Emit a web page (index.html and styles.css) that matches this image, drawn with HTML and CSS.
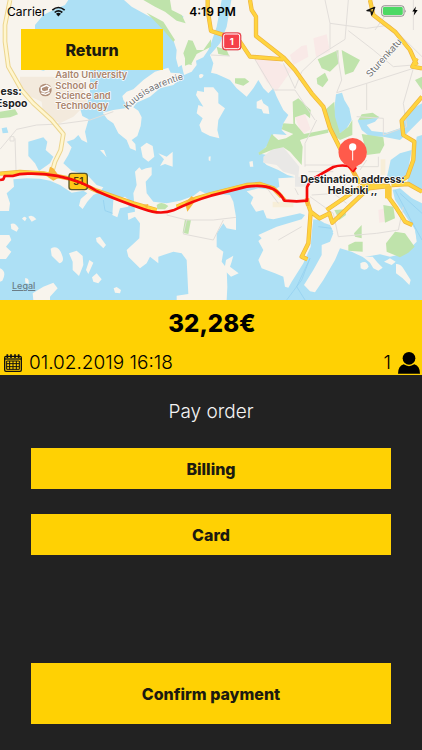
FILE: index.html
```html
<!DOCTYPE html>
<html lang="en">
<head>
<meta charset="utf-8">
<meta name="viewport" content="width=device-width, initial-scale=1">
<title>Pay order</title>
<link rel="stylesheet" href="styles.css">
</head>
<body>
<main class="app">
  <section class="map">
    <svg class="map-canvas" viewBox="0 0 1266 900" role="img" aria-label="Route from Espoo to Helsinki">
      <rect class="water" width="1266" height="900"/>

      <g transform="translate(0 180)">
        <!-- mainland and large peninsulas -->
        <g class="land">
          <path d="M0 -180H205L195 -165L160 -150L130 -135L105 -105V25L130 32L150 25H270V105L262 128L240 145L247 168L266 178L255 215L262 248L245 240L235 225L222 238L200 245L215 262L205 285L190 310L215 332L262 345L290 375L310 382L300 395L280 405L262 425L248 447L237 437L242 417L262 400L250 392L215 398L180 375L150 362L120 356L80 355L40 358L42 380L20 400L30 430L27 453L0 453Z"/>
          <path d="M372 -180L395 -160L440 -135L480 -115L500 -90L520 -60L530 -30L528 -5L535 22L545 15L552 45L575 35L590 15L588 2L610 -8L625 -30L633 -50L650 -100L665 -180Z"/>
          <path d="M367 108L380 95L400 88L430 60L465 35L505 23L512 38L540 40L545 52L520 75L480 85L450 110L410 128L400 142L415 152L425 172L422 198L412 228L395 240L406 252L408 272L390 265L380 240L355 220L340 190L322 178L308 158L340 150L385 143L370 120Z"/>
          <path d="M405 335L418 322L425 330L438 325L455 322L455 345L437 365L440 400L460 425L500 430L540 422L580 408L600 392L615 400L650 402L690 405L700 425L708 470L708 510L680 505L670 490L650 520L650 560L670 575L665 605L680 625L682 680L680 720H530V707L565 702L560 600L545 580L520 575L475 590L475 610L450 590L440 610L420 625L385 590L380 570L418 535L420 490L405 470L385 480L383 460L405 455L400 400L410 375Z"/>
          <path d="M694 -180H1266V440L1200 385L1178 390L1185 420L1225 480L1245 505L1250 545L1215 580L1170 590L1140 583L1090 592L1055 575L1020 565L1005 600L970 660L945 697L930 694L912 675L940 630L965 585L965 555L990 545L1000 520L983 495L958 480L940 478L935 520L932 560L910 610L875 665L865 683L855 680L850 650L825 640L785 625L775 600L790 570L775 543L785 535L775 525L830 500L905 478L915 465L900 460L820 478L800 475L790 450L768 455L752 430L760 412L740 394L775 385L820 390L838 380L835 355L862 353L885 352L862 345L835 330L800 315L790 305L800 285L775 280L795 265L815 240L820 222L860 225L845 210L850 190L865 165L850 150L830 110L820 85L805 100L790 85L775 60L760 85L740 110L710 85L690 60L650 42L633 38L640 10L630 -15L660 -50L680 -100Z"/>
        </g>

        <!-- islands -->
        <g class="land">
          <path d="M612 82L640 82L655 100L655 130L675 145L655 180L652 210L658 235L630 228L605 215L598 195L608 175L590 160L595 135L610 140L588 105L592 92L612 96Z"/>
          <path d="M597 46Q603 38 611 45Q607 58 598 53ZM422 262L440 248L458 258L463 290L445 305L428 292ZM475 280L500 290L518 275V320L495 312L480 318L492 298ZM300 270L312 270L320 292ZM626 290L632 289L631 304L626 301ZM770 125L785 118L790 130L805 140L808 162L790 160L785 148L770 145ZM748 305L758 303L760 320L750 320Z"/>
          <path d="M340 420L375 410L387 420L385 440L360 445L352 472L337 465ZM32 492Q45 485 56 505L50 515L34 507ZM66 476Q74 465 80 475L75 484ZM85 470Q98 462 109 478L95 485ZM0 525L28 525L34 540L18 560L34 575L18 597H0ZM0 625Q22 635 7 662L0 665Z"/>
          <path d="M152 566Q175 552 186 585Q195 605 178 610L155 587ZM207 580L230 572L248 588L250 615L237 648L218 630V605ZM268 600L280 608L265 642L258 630ZM288 534L300 530L318 555L310 565L290 545ZM276 652L290 640L305 658L295 670L280 665ZM341 685L350 681L363 690L360 700L345 698ZM98 700L130 680L160 668L173 685L150 710V720H100ZM75 655Q88 652 86 672L76 668Z"/>
          <path d="M1081 610Q1100 598 1106 620Q1098 635 1082 625ZM1088 590L1118 590L1133 608L1148 623L1135 632L1120 625L1110 608ZM1152 605L1170 595L1187 605L1175 615ZM1188 612Q1203 610 1213 630L1232 660L1228 675L1208 655L1188 640ZM678 600L700 587L695 605L690 620L716 640L693 650L673 630Z"/>
        </g>

        <!-- lakes and bays -->
        <g class="water">
          <path d="M85 245L130 232L142 245L137 270L160 290L150 310L117 333L105 310L85 288ZM5 205L20 202L25 218L8 220Z"/>
          <path d="M536 -135L550 -132L548 -115L530 -125Z"/>
          <path d="M1008 103L1026 98L1033 120L1048 145L1055 180L1040 205L1021 220L1008 205L1000 170Z"/>
          <path d="M1073 182L1085 168L1138 170L1125 185L1100 195L1115 213L1160 218L1200 205L1213 160L1266 130V175L1216 225L1200 240L1150 230L1110 230L1085 210Z"/>
          <path d="M1160 355L1172 300L1200 280L1235 270L1222 345L1200 368ZM1250 230L1266 225V390L1220 370L1240 310ZM1180 388L1266 430V610L1245 510Z"/>
          <path d="M958 500L970 497L985 525L975 522ZM975 490L990 495L1000 515L990 520Z"/>
        </g>

        <!-- neighbourhood blocks -->
        <path class="campus" d="M60 50H155L240 60L262 128L220 170L180 190L130 165L125 125L60 95Z"/>
        <path class="pink" d="M765 0L820 -2L875 30L830 93L800 65ZM870 -15L905 -42L920 -45L925 -10L880 15ZM940 -65L980 -77L990 -25L948 -10ZM885 170L915 162L932 208L905 225ZM1135 450L1155 445V485L1138 488Z"/>
        <path class="paved" d="M790 290L820 265L850 262L898 320L895 350L920 350V380H885V345L850 335L830 315L790 308Z"/>
        <path class="block" d="M1142 298H1156V345H1142ZM818 425L880 428V442H818Z"/>

        <!-- parks -->
        <g class="park">
          <path d="M430 -180H510L515 -150L545 -135L557 -110L530 -118L495 -145L465 -160ZM440 -142L490 -115L525 -60L520 -55L490 -90ZM550 -20L565 -60L578 -58L590 -30L610 -30L633 -62V-40L590 -18L575 10L555 17V-5ZM560 0H575V15L562 12Z"/>
          <path d="M0 155L45 148L54 163L30 172L0 175ZM650 -40L680 -30L688 -12L655 -18ZM705 55H735L748 65L730 77L705 70Z"/>
          <path d="M953 -2L1015 -30L1016 10L990 35L965 25ZM1025 -30L1080 0L1060 35L1035 44ZM950 55L975 38L985 60L968 82L952 72Z"/>
          <path d="M878 125L895 115L932 150L930 175L915 162L885 172V190L912 222L985 208V218L925 232L900 240L908 260L905 315L870 275L850 262L820 268L778 285L775 278L798 262L815 222L835 240L858 235L880 222L845 208L850 190L880 192ZM975 150L1003 125L1005 170L1020 220L1045 200L1057 180V225L1020 240L1000 225ZM1075 180L1085 163L1118 158L1138 172L1105 178ZM1085 222L1150 232L1153 255L1140 280L1100 285Z"/>
          <path d="M470 435Q485 422 505 438L495 448H472ZM555 478L573 480L565 522L548 518ZM1003 450L1035 448L1038 465L1018 480ZM1062 520L1085 495V535L1065 530ZM1045 555L1065 545H1088V575L1045 572ZM1150 435L1180 440L1185 475L1155 488ZM1158 550L1185 515L1215 520L1244 560L1225 578L1200 592L1160 575ZM1245 60L1266 50V90Z"/>
        </g>

        <!-- minor streets -->
        <path class="street" d="M0 268L50 208L110 195L180 192L270 180L340 155M45 235L48 330M30 230H42V243H30ZM500 465L560 480L640 480L708 472M560 480L550 522L640 540L670 480M633 -15L690 -12M760 -10L820 90H885L945 180M850 10L885 85L905 35L950 -8L1035 -62L1045 -180M975 -180L990 -110L1100 -95L1170 -105L1266 -10M990 -110V-35M1010 -30L1025 60L1010 98L1100 70L1240 25M1045 -88L1120 -30L1180 20L1240 15M1100 70V150M950 180L915 250V320M1070 170L1150 175V225L1220 200L1210 130L1240 25M1125 -90L1160 -140M1240 -90V-180M915 315H1010M925 335H1000M1070 320H1135V290M1080 330L1100 300M790 370L835 430M885 385L895 405M930 410L1000 460L1015 530L1130 520L1195 510L1210 440M935 405L1010 400L1060 350M1000 400L1040 430M905 500L835 540"/>
        <path class="ferry" d="M930 595L905 660L860 720M930 595L890 680L915 720M1185 390L1230 475L1266 540M1200 400L1266 460M310 420L315 452L338 460M955 500L995 505"/>

        <!-- main roads -->
        <path class="minor-case" d="M30 -180L15 -105V-55L25 20L65 90L100 130L155 180L190 222L182 270L165 305L155 340"/>
        <path class="minor" d="M30 -180L15 -105V-55L25 20L65 90L100 130L155 180L190 222L182 270L165 305L155 340"/>
        <g class="road-case">
          <path id="ring-a" d="M750 -180L755 -150L768 -130V-72L850 -8L885 30L935 100L970 140L990 205L1020 265L1060 335L1080 370M623 -180V-150L633 -87L665 -77L720 -55L750 -10L850 -2M1110 -180L1120 -135L1185 -85L1230 -30L1250 15M1266 110L1205 182L1210 225L1243 245L1240 300L1222 350L1190 370M1250 -5L1237 20L1266 25"/>
          <path id="ring-b" d="M920 420L932 455L925 550L905 590L922 598M932 455L958 475L988 460L997 488L1105 385L1165 378M980 450L1090 375L1165 378V410L1190 445L1215 485L1237 495M1175 375L1225 372L1266 395"/>
          <path id="ring-c" d="M0 341L60 336L130 340L210 356L290 392L400 430L470 450M530 440L590 415L633 402L740 375L780 372L820 385L845 410"/>
        </g>
        <g class="road">
          <use href="#ring-a"/><use href="#ring-b"/><use href="#ring-c"/>
        </g>
        <path class="road-wide" d="M1165 378V415"/>
        <path class="junction" d="M150 320L160 325L180 352L160 362L142 350ZM555 430L575 408L588 420L562 455ZM430 435L445 432L442 445ZM848 405L860 418L848 424ZM914 415H928V438H918ZM1048 325L1068 338L1074 350L1060 350Z"/>
      </g>

      <!-- route and shields -->
      <rect class="shield51" x="207" y="520" width="55" height="49" rx="8"/>
      <text class="shield51-text" x="235" y="554">51</text>
      <path class="route" d="M0 540L10 538L14 528H38Q60 520 90 521Q170 520 245 549Q270 560 290 573Q350 600 430 627Q480 646 520 631Q580 602 633 587L740 560Q790 553 820 567Q842 580 853 602L890 604L921 602V562Q925 550 940 536L1000 501Q1020 494 1045 498L1060 513L1068 502"/>

      <rect class="shield1" x="667" y="98" width="56" height="52" rx="9"/>
      <rect class="shield1-line" x="671" y="102" width="48" height="44" rx="6"/>
      <text class="shield1-text" x="695" y="135">1</text>

      <!-- place labels -->
      <circle class="poi" cx="136" cy="270" r="19"/>
      <path class="poi-mark" d="M124 263L140 256L151 263L146 266V272L133 276L124 272ZM124 279L137 283L149 277"/>
      <g class="poi-label">
        <text x="166" y="235">Aalto University</text>
        <text x="166" y="266">School of</text>
        <text x="166" y="296">Science and</text>
        <text x="166" y="327">Technology</text>
      </g>
      <path id="kuusi" class="guide" d="M384 331Q440 262 580 231"/>
      <text class="street-label"><textPath href="#kuusi">Kuusisaarentie</textPath></text>
      <text class="street-label" transform="translate(1111 233) rotate(-48)">Sturenkatu</text>

      <!-- map pin -->
      <path class="pin" d="M1058 414A43 43 0 0 1 1084 491Q1065 500 1058 513Q1051 500 1032 491A43 43 0 0 1 1058 414Z"/>
      <path class="pin-stem" d="M1058 448V481"/>
      <circle class="pin-head" cx="1058" cy="441" r="11"/>
      <g class="pin-label">
        <text class="end" x="65" y="285">ess:</text>
        <text class="end" x="82" y="320">Espoo</text>
        <text class="mid" x="1058" y="548">Destination address:</text>
        <text class="mid" x="1058" y="582">Helsinki ,,</text>
      </g>
    </svg>

    <div class="overlay">
      <div class="status">
        <span class="carrier">Carrier
          <svg class="wifi" viewBox="0 0 45 32" aria-hidden="true"><path d="M4 12Q22 -4 41 12M11 19Q22 9 34 19"/><path class="solid" d="M15 23Q22 17 30 23L22 31Z"/></svg>
        </span>
        <span class="time">4:19 PM</span>
        <span class="power">
          <svg class="locate" viewBox="0 0 30 30" aria-hidden="true"><path d="M3 14L26 4L17 27L15 15Z"/></svg>
          <svg class="battery" viewBox="0 0 80 36" aria-hidden="true"><rect class="shell" x="2" y="2" width="69" height="32" rx="8"/><rect class="charge" x="6" y="6" width="61" height="24" rx="4"/><path class="cap" d="M74 13Q79 18 74 23Z"/></svg>
          <svg class="bolt" viewBox="0 0 20 30" aria-hidden="true"><path d="M13 0L1 17H8L6 30L19 12H11Z"/></svg>
        </span>
      </div>
      <button class="btn return" type="button">Return</button>
      <a class="legal" href="#legal">Legal</a>
    </div>
  </section>

  <section class="summary">
    <p class="price">32,28€</p>
    <div class="details">
      <span class="detail">
        <svg class="calendar" viewBox="0 0 54 54" aria-hidden="true"><rect x="2" y="7" width="50" height="45" rx="4"/><path d="M2 15H52"/><path class="rings" d="M10 1V12M21 1V12M33 1V12M44 1V12"/><path class="cells" d="M8 21H46V46H8ZM8 29H46M8 38H46M17 21V46M27 21V46M37 21V46"/></svg>
        <time datetime="2019-02-01T16:18">01.02.2019 16:18</time>
      </span>
      <span class="detail">1
        <svg class="person" viewBox="0 0 66 66" aria-hidden="true"><circle cx="33" cy="19" r="19"/><path d="M17 37Q33 48 49 37Q66 43 66 65H0Q0 43 17 37Z"/></svg>
      </span>
    </div>
  </section>

  <section class="payment">
    <h1 class="title">Pay order</h1>
    <button class="btn method" type="button">Billing</button>
    <button class="btn method" type="button">Card</button>
    <button class="btn confirm" type="button">Confirm payment</button>
  </section>
</main>
</body>
</html>
```

FILE: styles.css
```css
* { box-sizing: border-box; }
body {
  margin: 0;
  background: #222;
  color: #000;
  font-family: Inter, "Open Sans", sans-serif;
}
.app { display: flex; flex-direction: column; min-height: 100vh; }

/* Map */
.map { display: grid; }
.map-canvas, .overlay { grid-area: 1 / 1; }
.map-canvas { display: block; width: 100%; height: auto; }
.water { fill: #ade0f5; }
.land { fill: #f8f4ed; }
.campus { fill: #f3eadd; }
.pink { fill: #f9e9e7; }
.paved { fill: #e9e8e6; }
.block { fill: #f7eed8; }
.park { fill: #bfe3ab; }
.street, .ferry, .road, .road-case, .road-wide, .minor, .minor-case, .guide, .route {
  fill: none;
  stroke-linejoin: round;
}
.street { stroke: #e2deda; stroke-width: 3; }
.ferry { stroke: #8fcdee; stroke-width: 2; }
.minor-case { stroke: #ecd58e; stroke-width: 14; }
.minor { stroke: #fff6cf; stroke-width: 8; }
.road-case { stroke: #edb340; stroke-width: 13; }
.road { stroke: #ffd43e; stroke-width: 9; }
.road-wide { stroke: #fbcb3d; stroke-width: 20; }
.junction { fill: #f9b83c; }
.route { stroke: #f50a0a; stroke-width: 8; }
.shield51 { fill: #fdc816; stroke: #5b5528; stroke-width: 4; }
.shield51-text { font-size: 30px; font-weight: 600; text-anchor: middle; fill: #4a3a10; }
.shield1 { fill: #f5404a; stroke: #d9353f; stroke-width: 2; }
.shield1-line { fill: none; stroke: #fff; stroke-width: 3; }
.shield1-text { font-size: 28px; font-weight: 700; text-anchor: middle; fill: #fff; }
.poi { fill: #b08e78; }
.poi-mark { fill: none; stroke: #fff; stroke-width: 4; }
.poi-label { font-size: 28px; font-weight: 600; fill: #a9836b; }
.poi-label, .street-label, .pin-label { stroke: #fff; stroke-width: 4; paint-order: stroke; stroke-linejoin: round; }
.street-label { font-size: 28px; fill: #6f6f6f; }
.pin { fill: #ff5a4b; }
.pin-stem { stroke: #fff; stroke-width: 3; }
.pin-head { fill: #fff; }
.pin-label { font-size: 31px; font-weight: 700; fill: #222; }
.end { text-anchor: end; }
.mid { text-anchor: middle; }

/* Controls over the map */
.overlay { display: flex; flex-direction: column; align-items: flex-start; }
.status {
  display: grid;
  grid-template-columns: 1fr auto 1fr;
  align-items: center;
  width: 100%;
  height: 22px;
  padding: 0 4px 0 7px;
  font-size: 12px;
}
.carrier, .power { display: flex; align-items: center; gap: 5px; }
.power { justify-content: flex-end; }
.time { font-weight: 600; }
.wifi { width: 15px; height: 11px; fill: none; stroke: #111; stroke-width: 5; }
.wifi .solid { fill: #111; stroke: none; }
.locate { width: 10px; height: 10px; fill: none; stroke: #111; stroke-width: 4; stroke-linejoin: round; }
.battery { width: 26px; height: 12px; }
.shell { fill: #f8f4ed; stroke: #888; stroke-width: 3; }
.charge { fill: #4cd964; }
.cap { fill: #888; }
.bolt { width: 6px; height: 10px; }

.btn {
  border: 0;
  background: #ffd103;
  color: #1c1a10;
  font: 800 16px/20px Inter, "Open Sans", sans-serif;
  cursor: pointer;
}
.return { width: 142px; height: 41px; margin: 7px 0 0 21px; }
.legal { margin: auto 0 8px 12px; color: #6b7d87; font-size: 9px; line-height: 12px; font-weight: 500; }

/* Order summary */
.summary { background: #ffd103; padding: 8px 2px 0 4px; }
.price { margin: 0; text-align: center; font-size: 24px; line-height: 32px; font-weight: 800; }
.details { display: flex; justify-content: space-between; align-items: center; height: 35px; padding-top: 10px; }
.detail { display: flex; align-items: center; gap: 7px; font-size: 19px; line-height: 24px; font-weight: 300; }
.calendar { width: 18px; height: 18px; fill: none; stroke: #111; stroke-width: 4; }
.rings { stroke-width: 5; }
.cells { stroke-width: 3; }
.person { width: 22px; height: 22px; }

/* Payment choice */
.payment {
  flex: 1;
  display: flex;
  flex-direction: column;
  padding: 25px 31px 26px;
  background: #222;
}
.title { margin: 0 0 24px; color: #f4f4f4; text-align: center; font-size: 19px; line-height: 24px; font-weight: 300; }
.method { height: 41px; margin-bottom: 25px; }
.confirm { height: 61px; margin-top: auto; }
```
